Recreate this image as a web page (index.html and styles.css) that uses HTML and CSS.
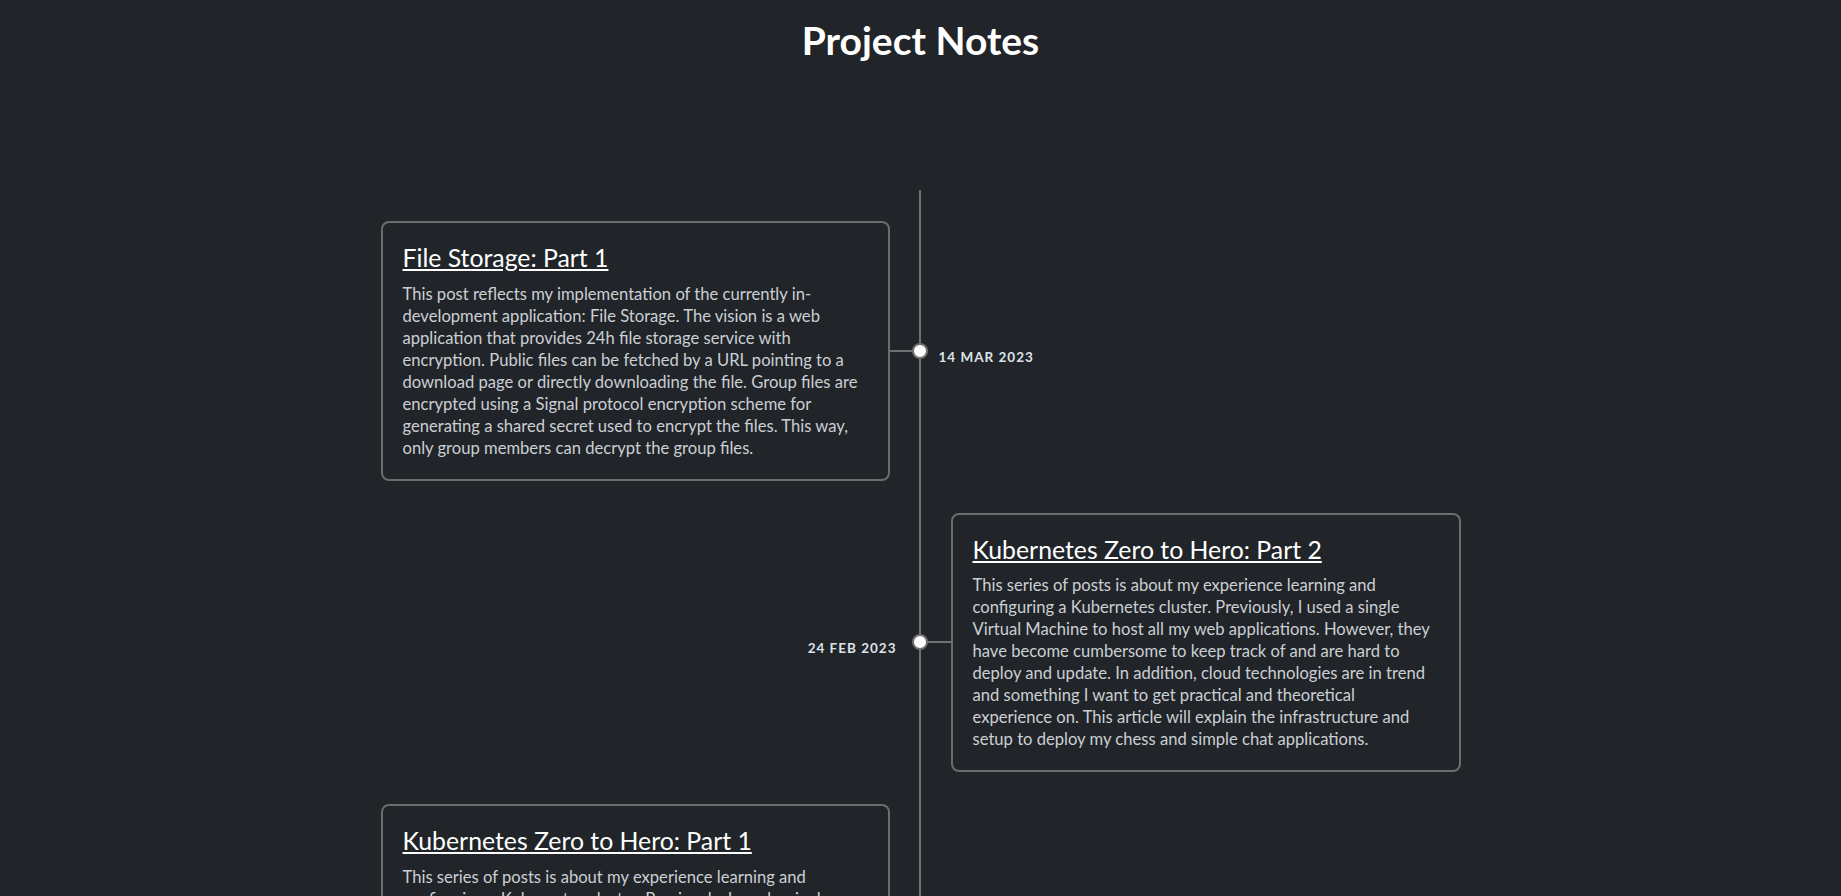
FILE: index.html
```html
<!DOCTYPE html>
<html>
<head>
    <title>Project Notes</title>
    <link rel="stylesheet" href="styles.css">
</head>
<body>
    <h1 class="page-title">Project Notes</h1>

    <div class="timeline">
        <div class="entry entry-left">
            <span class="entry-date">14 Mar 2023</span>
            <div class="card">
                <h2 class="card-title"><a href="#">File Storage: Part 1</a></h2>
                <p class="card-text">This post reflects my implementation of the currently in-development application: File Storage. The vision is a web application that provides 24h file storage service with encryption. Public files can be fetched by a URL pointing to a download page or directly downloading the file. Group files are encrypted using a Signal protocol encryption scheme for generating a shared secret used to encrypt the files. This way, only group members can decrypt the group files.</p>
            </div>
        </div>

        <div class="entry entry-right">
            <span class="entry-date">24 Feb 2023</span>
            <div class="card">
                <h2 class="card-title"><a href="#">Kubernetes Zero to Hero: Part 2</a></h2>
                <p class="card-text">This series of posts is about my experience learning and configuring a Kubernetes cluster. Previously, I used a single Virtual Machine to host all my web applications. However, they have become cumbersome to keep track of and are hard to deploy and update. In addition, cloud technologies are in trend and something I want to get practical and theoretical experience on. This article will explain the infrastructure and setup to deploy my chess and simple chat applications.</p>
            </div>
        </div>

        <div class="entry entry-left">
            <span class="entry-date">10 Feb 2023</span>
            <div class="card">
                <h2 class="card-title"><a href="#">Kubernetes Zero to Hero: Part 1</a></h2>
                <p class="card-text">This series of posts is about my experience learning and configuring a Kubernetes cluster. Previously, I used a single Virtual Machine to host all my web applications. However, they have become cumbersome to keep track of and are hard to deploy and update. In addition, cloud technologies are in trend and something I want to get practical and theoretical experience on. This article will explain the infrastructure and setup to deploy my chess and simple chat applications.</p>
            </div>
        </div>
    </div>
</body>
</html>
```

FILE: styles.css
```css
body {
    margin: 0;
    background-color: #212529;
    color: #ffffff;
    font-family: Lato, "Open Sans", sans-serif;
}
.page-title {
    text-align: center;
    font-size: 39px;
    font-weight: 700;
    line-height: 1.2;
    margin: 17px 0 0;
}
.timeline {
    position: relative;
    max-width: 1080px;
    margin: 126px auto 0;
    padding: 31px 0 40px;
}
.timeline::before {
    content: '';
    position: absolute;
    top: 0;
    bottom: 0;
    left: 50%;
    width: 2px;
    margin-left: -2px;
    background-color: #707070;
}
.entry {
    position: relative;
    width: 50%;
    box-sizing: border-box;
    margin-bottom: 32px;
}
.entry-left {
    padding-right: 31px;
}
.entry-right {
    margin-left: 50%;
    padding-left: 30px;
}
/* connector */
.entry::before {
    content: '';
    position: absolute;
    top: 50%;
    width: 31px;
    height: 2px;
    margin-top: -1px;
    background-color: #707070;
}
.entry-left::before {
    right: 0;
}
.entry-right::before {
    left: 0;
}
/* dot */
.entry::after {
    content: '';
    position: absolute;
    top: 50%;
    width: 12px;
    height: 12px;
    margin-top: -8px;
    border: 2px solid #707070;
    border-radius: 50%;
    background-color: #ffffff;
}
.entry-left::after {
    right: -7px;
}
.entry-right::after {
    left: -9px;
}
.entry-date {
    position: absolute;
    top: 50%;
    margin-top: -1px;
    font-size: 13.5px;
    line-height: 14px;
    font-weight: 700;
    letter-spacing: 1px;
    text-transform: uppercase;
    color: #dde2e9;
    white-space: nowrap;
}
.entry-left .entry-date {
    left: 100%;
    margin-left: 18px;
}
.entry-right .entry-date {
    right: 100%;
    margin-right: 24px;
}
.card {
    border: 2px solid #6c6c6c;
    border-radius: 8px;
    padding: 20px;
}
.card-title {
    font-size: 24.8px;
    font-weight: 400;
    line-height: 1.2;
    margin: 0 0 10px;
}
.card-title a {
    color: #ffffff;
}
.card-text {
    font-size: 16.6px;
    line-height: 22px;
    margin: 0;
    color: #cbcfd4;
}
```
